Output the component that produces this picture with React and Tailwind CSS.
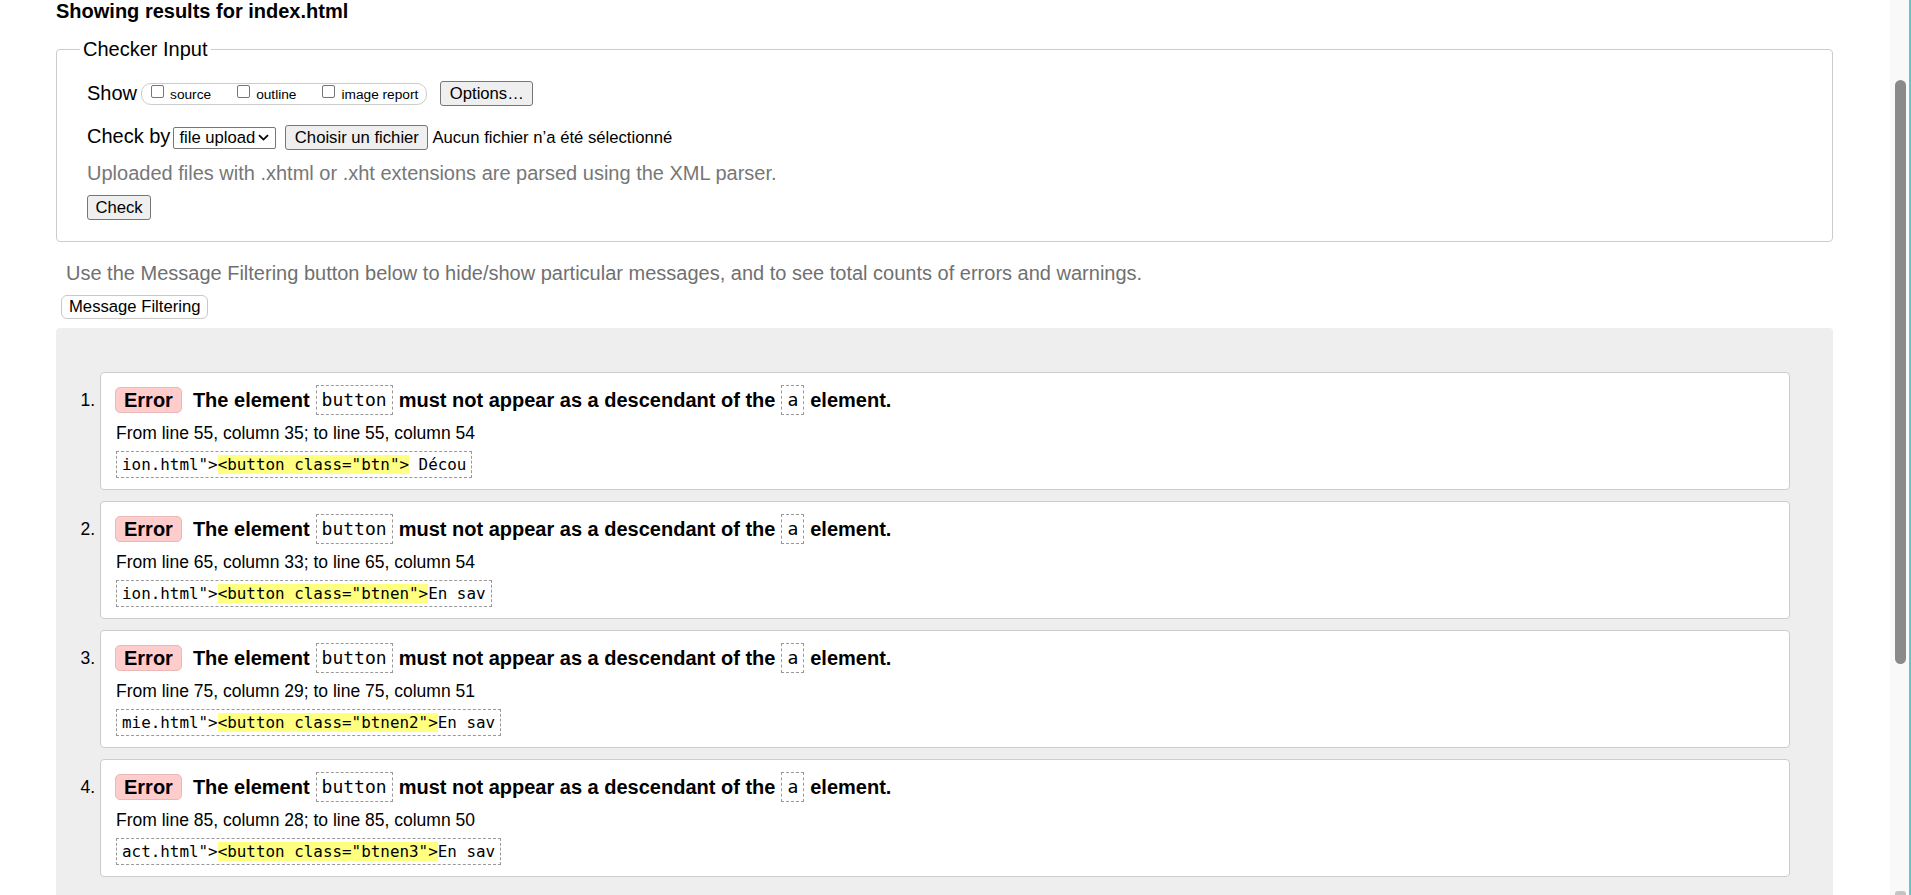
const messages = [
    {
        n: 1,
        from: 'From line 55, column 35; to line 55, column 54',
        pre: 'ion.html">',
        hl: '<button class="btn">',
        post: ' Décou',
    },
    {
        n: 2,
        from: 'From line 65, column 33; to line 65, column 54',
        pre: 'ion.html">',
        hl: '<button class="btnen">',
        post: 'En sav',
    },
    {
        n: 3,
        from: 'From line 75, column 29; to line 75, column 51',
        pre: 'mie.html">',
        hl: '<button class="btnen2">',
        post: 'En sav',
    },
    {
        n: 4,
        from: 'From line 85, column 28; to line 85, column 50',
        pre: 'act.html">',
        hl: '<button class="btnen3">',
        post: 'En sav',
    },
];

const mono = "font-['DejaVu_Sans_Mono','Liberation_Mono',monospace]";

function FakeCheckbox({ label }) {
    return (
        <label className="flex items-center">
            <span className="w-[13px] h-[13px] border border-[#767676] rounded-[2px] bg-white mb-[4px]"></span>
            <span className="ml-[6px] text-[13.7px] leading-[16px] mt-[2px]">{label}</span>
        </label>
    );
}

function NativeButton({ children, className = '' }) {
    return (
        <button
            type="button"
            className={`h-[25px] bg-[#efefef] border border-[#767676] rounded-[3px] text-[16.67px] leading-[20px] text-black flex items-center justify-center ${className}`}
        >
            {children}
        </button>
    );
}

function Code({ children }) {
    return (
        <code
            className={`${mono} inline-block border border-dashed border-[#999] px-[5px] text-[18px] leading-[28px] font-normal mx-[6px]`}
        >
            {children}
        </code>
    );
}

function MessageCard({ msg }) {
    return (
        <li className="flex">
            <div className="w-[44px] shrink-0 text-right pr-[5px] pt-[18px] text-[17.5px] leading-[20px]">
                {msg.n}.
            </div>
            <div className="flex-1 min-w-0 bg-white border border-[#ccc] rounded-[4px] pl-[14px] pt-[12px] pb-[11px]">
                <div className="flex items-center h-[30px]">
                    <span className="h-[26px] px-[8px] bg-[#fcc] border border-[#e9b8b8] rounded-[5px] text-[20px] font-bold leading-[24px]">
                        Error
                    </span>
                    <p className="ml-[11px] text-[20px] font-bold leading-[30px] flex items-center whitespace-pre">
                        The element
                        <Code>button</Code>
                        must not appear as a descendant of the
                        <Code>a</Code>
                        element.
                    </p>
                </div>
                <p className="mt-[8px] ml-[1px] text-[17.5px] leading-[20px]">{msg.from}</p>
                <div className="mt-[8px] ml-[1px]">
                    <code
                        className={`${mono} inline-block border border-dashed border-[#999] px-[5px] text-[15.9px] leading-[25px] whitespace-pre`}
                    >
                        {msg.pre}
                        <span className="bg-[#ffff80]">{msg.hl}</span>
                        {msg.post}
                    </code>
                </div>
            </div>
        </li>
    );
}

function App() {
    return (
        <div className="flex h-[895px] overflow-hidden bg-white text-black font-['Liberation_Sans',Arial,sans-serif]">
            <main className="flex-1 min-w-0 flex flex-col pl-[56px] pr-[57px]">
                <h2 className="text-[20px] font-bold leading-[23px]">Showing results for index.html</h2>

                <fieldset className="mt-[15px] border border-[#ccc] rounded-[4px] pl-[30px] pb-[21px]">
                    <legend className="ml-[-7px] px-[3px] text-[20px] leading-[23px]">Checker Input</legend>

                    <div className="mt-[19px] h-[27px] flex items-center">
                        <span className="text-[20px] leading-[23px]">Show</span>
                        <div className="ml-[4px] h-[22px] flex items-center border border-[#ccc] rounded-[10px] pl-[9px] pr-[8px] gap-[26px]">
                            <FakeCheckbox label="source" />
                            <FakeCheckbox label="outline" />
                            <FakeCheckbox label="image report" />
                        </div>
                        <NativeButton className="ml-[13px] w-[93px]">Options…</NativeButton>
                    </div>

                    <div className="mt-[17px] h-[27px] flex items-center">
                        <span className="text-[20px] leading-[23px] mb-[3px]">Check by</span>
                        <div className="ml-[3px] w-[103px] h-[22px] flex items-center justify-between bg-white border border-[#767676] rounded-[2px] pl-[5px] pr-[6px] text-[16.67px] leading-[20px]">
                            <span>file upload</span>
                            <svg width="11" height="7" viewBox="0 0 11 7" fill="none">
                                <path d="M1 1.2 L5.5 5.6 L10 1.2" stroke="#000" strokeWidth="1.8" />
                            </svg>
                        </div>
                        <NativeButton className="ml-[9px] w-[143px]">Choisir un fichier</NativeButton>
                        <span className="ml-[4px] text-[16.67px] leading-[20px]">Aucun fichier n’a été sélectionné</span>
                    </div>

                    <p className="mt-[11px] text-[20px] leading-[23px] text-[#777]">
                        Uploaded files with .xhtml or .xht extensions are parsed using the XML parser.
                    </p>

                    <NativeButton className="mt-[10px] w-[64px]">Check</NativeButton>
                </fieldset>

                <p className="mt-[20px] ml-[10px] text-[20px] leading-[23px] text-[#707070]">
                    Use the Message Filtering button below to hide/show particular messages, and to see total counts of errors and warnings.
                </p>

                <div>
                    <button
                        type="button"
                        className="mt-[10px] ml-[5px] h-[24px] px-[7px] bg-white border border-[#c8c8c8] rounded-[6px] text-[16.67px] leading-[20px]"
                    >
                        Message Filtering
                    </button>
                </div>

                <div className="mt-[9px] flex-1 bg-[#eee] rounded-t-[4px] pt-[44px] pr-[43px]">
                    <ol className="flex flex-col gap-[11px]">
                        {messages.map((msg) => (
                            <MessageCard key={msg.n} msg={msg} />
                        ))}
                    </ol>
                </div>
            </main>

            {/* browser scrollbar */}
            <div className="w-[21px] shrink-0 flex bg-[#f9f9f9]">
                <div className="flex-1 flex flex-col items-center pt-[80px] pl-[1px]">
                    <div className="w-[11px] h-[584px] bg-[#8a8a8a] rounded-full"></div>
                    <div className="flex-1"></div>
                    <div className="w-[11px] h-[4px] bg-[#c4c4c4] rounded-t-[3px]"></div>
                </div>
                <div className="w-[2px] bg-[#5cc8c8]"></div>
            </div>
        </div>
    );
}

export default App;
